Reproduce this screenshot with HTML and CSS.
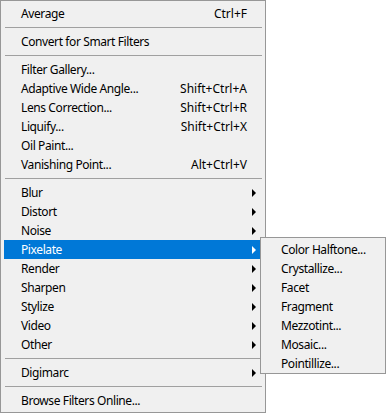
FILE: index.html
```html
<!DOCTYPE html>
<html lang="en">
<head>
    <meta charset="UTF-8">
    <title>Filter Menu</title>
    <link rel="stylesheet" href="styles.css">
</head>
<body>
    <div class="menu">
        <div class="item"><span>Average</span><span class="key">Ctrl+F</span><span></span></div>
        <div class="sep"></div>
        <div class="item"><span>Convert for Smart Filters</span><span></span><span></span></div>
        <div class="sep"></div>
        <div class="item"><span>Filter Gallery...</span><span></span><span></span></div>
        <div class="item"><span>Adaptive Wide Angle...</span><span class="key">Shift+Ctrl+A</span><span></span></div>
        <div class="item"><span>Lens Correction...</span><span class="key">Shift+Ctrl+R</span><span></span></div>
        <div class="item"><span>Liquify...</span><span class="key">Shift+Ctrl+X</span><span></span></div>
        <div class="item"><span>Oil Paint...</span><span></span><span></span></div>
        <div class="item"><span>Vanishing Point...</span><span class="key">Alt+Ctrl+V</span><span></span></div>
        <div class="sep"></div>
        <div class="item"><span>Blur</span><span></span><span class="arrow"></span></div>
        <div class="item"><span>Distort</span><span></span><span class="arrow"></span></div>
        <div class="item"><span>Noise</span><span></span><span class="arrow"></span></div>
        <div class="item active"><span>Pixelate</span><span></span><span class="arrow"></span></div>
        <div class="item"><span>Render</span><span></span><span class="arrow"></span></div>
        <div class="item"><span>Sharpen</span><span></span><span class="arrow"></span></div>
        <div class="item"><span>Stylize</span><span></span><span class="arrow"></span></div>
        <div class="item"><span>Video</span><span></span><span class="arrow"></span></div>
        <div class="item"><span>Other</span><span></span><span class="arrow"></span></div>
        <div class="sep"></div>
        <div class="item"><span>Digimarc</span><span></span><span class="arrow"></span></div>
        <div class="sep"></div>
        <div class="item"><span>Browse Filters Online...</span><span></span><span></span></div>

        <!-- Pixelate submenu -->
        <div class="submenu">
            <div class="item"><span>Color Halftone...</span></div>
            <div class="item"><span>Crystallize...</span></div>
            <div class="item"><span>Facet</span></div>
            <div class="item"><span>Fragment</span></div>
            <div class="item"><span>Mezzotint...</span></div>
            <div class="item"><span>Mosaic...</span></div>
            <div class="item"><span>Pointillize...</span></div>
        </div>
    </div>
</body>
</html>
```

FILE: styles.css
```css
/* Page reset */
html, body {
    margin: 0;
    padding: 0;
    background: #ffffff;
    font-family: "Noto Sans", "Noto Sans CJK KR", sans-serif;
    font-size: 12px;
    letter-spacing: -0.4px; /* closer to the narrow UI font */
    color: #000000;
}

/* Main menu */
.menu {
    position: relative;
    width: 258px;
    padding: 3px 3px 2px 3px;
    background: #f0f0f0;
    border: 1px solid #979797;
}

.item {
    display: grid;
    grid-template-columns: 1fr auto 4px;
    column-gap: 5px;
    align-items: center;
    height: 19px;
    line-height: 19px;
    padding: 0 6px 0 17px;
    white-space: nowrap;
}

.item.active {
    background: #0078d7;
    color: #ffffff;
}

.key {
    text-align: right;
    letter-spacing: 0;
}

/* Submenu arrow */
.arrow {
    width: 0;
    height: 0;
    border-left: 4px solid #000000;
    border-top: 4px solid transparent;
    border-bottom: 4px solid transparent;
}

.item.active .arrow {
    border-left-color: #ffffff;
}

/* Separator */
.sep {
    height: 1px;
    margin: 4px 0 4px 1px;
    background: #a0a0a0;
}

/* Flyout */
.submenu {
    position: absolute;
    left: 259px;
    top: 236px;
    width: 118px;
    padding: 2px 3px 0 3px;
    background: #f0f0f0;
    border: 1px solid #979797;
}

.submenu .item {
    display: block;
    padding: 0 4px 0 17px;
}
```
